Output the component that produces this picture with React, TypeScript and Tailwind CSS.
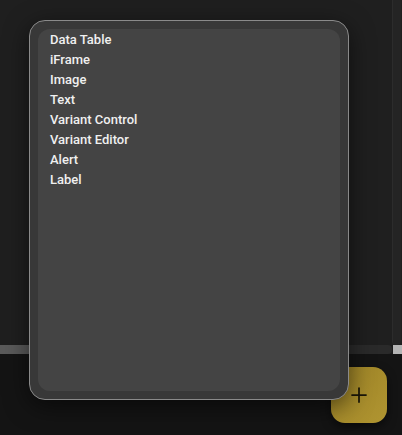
import { Plus } from "lucide-react";

const items = [
  "Data Table",
  "iFrame",
  "Image",
  "Text",
  "Variant Control",
  "Variant Editor",
  "Alert",
  "Label",
];

export default function App() {
  return (
    <div
      className="relative w-[402px] h-[435px] overflow-hidden bg-[#141414] flex flex-col"
      style={{ fontFamily: "Roboto, 'Liberation Sans', sans-serif" }}
    >
      {/* canvas area with vertical scrollbar */}
      <div className="flex h-[345px] bg-[#1f1f1f]">
        <div className="flex-1" />
        <div className="w-[9px] mr-[1px] rounded-b-[4px] bg-[#242424] border-l border-[#2c2c2c]" />
      </div>

      {/* horizontal scrollbar */}
      <div className="flex h-[9px] bg-[#1c1c1c]">
        <div className="w-[80px] bg-[#5a5a5a]" />
        <div className="flex-1 rounded-[4px] bg-[#2a2a2a] mr-[1px]" />
        <div className="w-[9px] bg-[#b4b4b4]" />
      </div>

      {/* bottom bar */}
      <div className="flex-1 flex justify-end items-start pt-[13px] pr-[15px]">
        <button className="w-[56px] h-[56px] rounded-[14px] bg-gradient-to-br from-[#9c8226] to-[#b09531] shadow-[0_4px_10px_rgba(0,0,0,0.5)] flex items-center justify-center text-[#1a1608]">
          <Plus className="w-[24px] h-[24px]" strokeWidth={1.75} />
        </button>
      </div>

      {/* popup menu */}
      <div className="absolute left-[29px] top-[20px] w-[320px] h-[380px] rounded-[16px] border border-[#8a8a8a] bg-[#383838] p-[8px] shadow-[0_6px_24px_rgba(0,0,0,0.55)]">
        <div className="h-full rounded-[12px] bg-[#444444] pt-[1px] pl-[12px]">
          {items.map((item) => (
            <div
              key={item}
              className="h-[20px] flex items-center text-[13px] font-medium text-[#f0f0f0]"
            >
              {item}
            </div>
          ))}
        </div>
      </div>
    </div>
  );
}
